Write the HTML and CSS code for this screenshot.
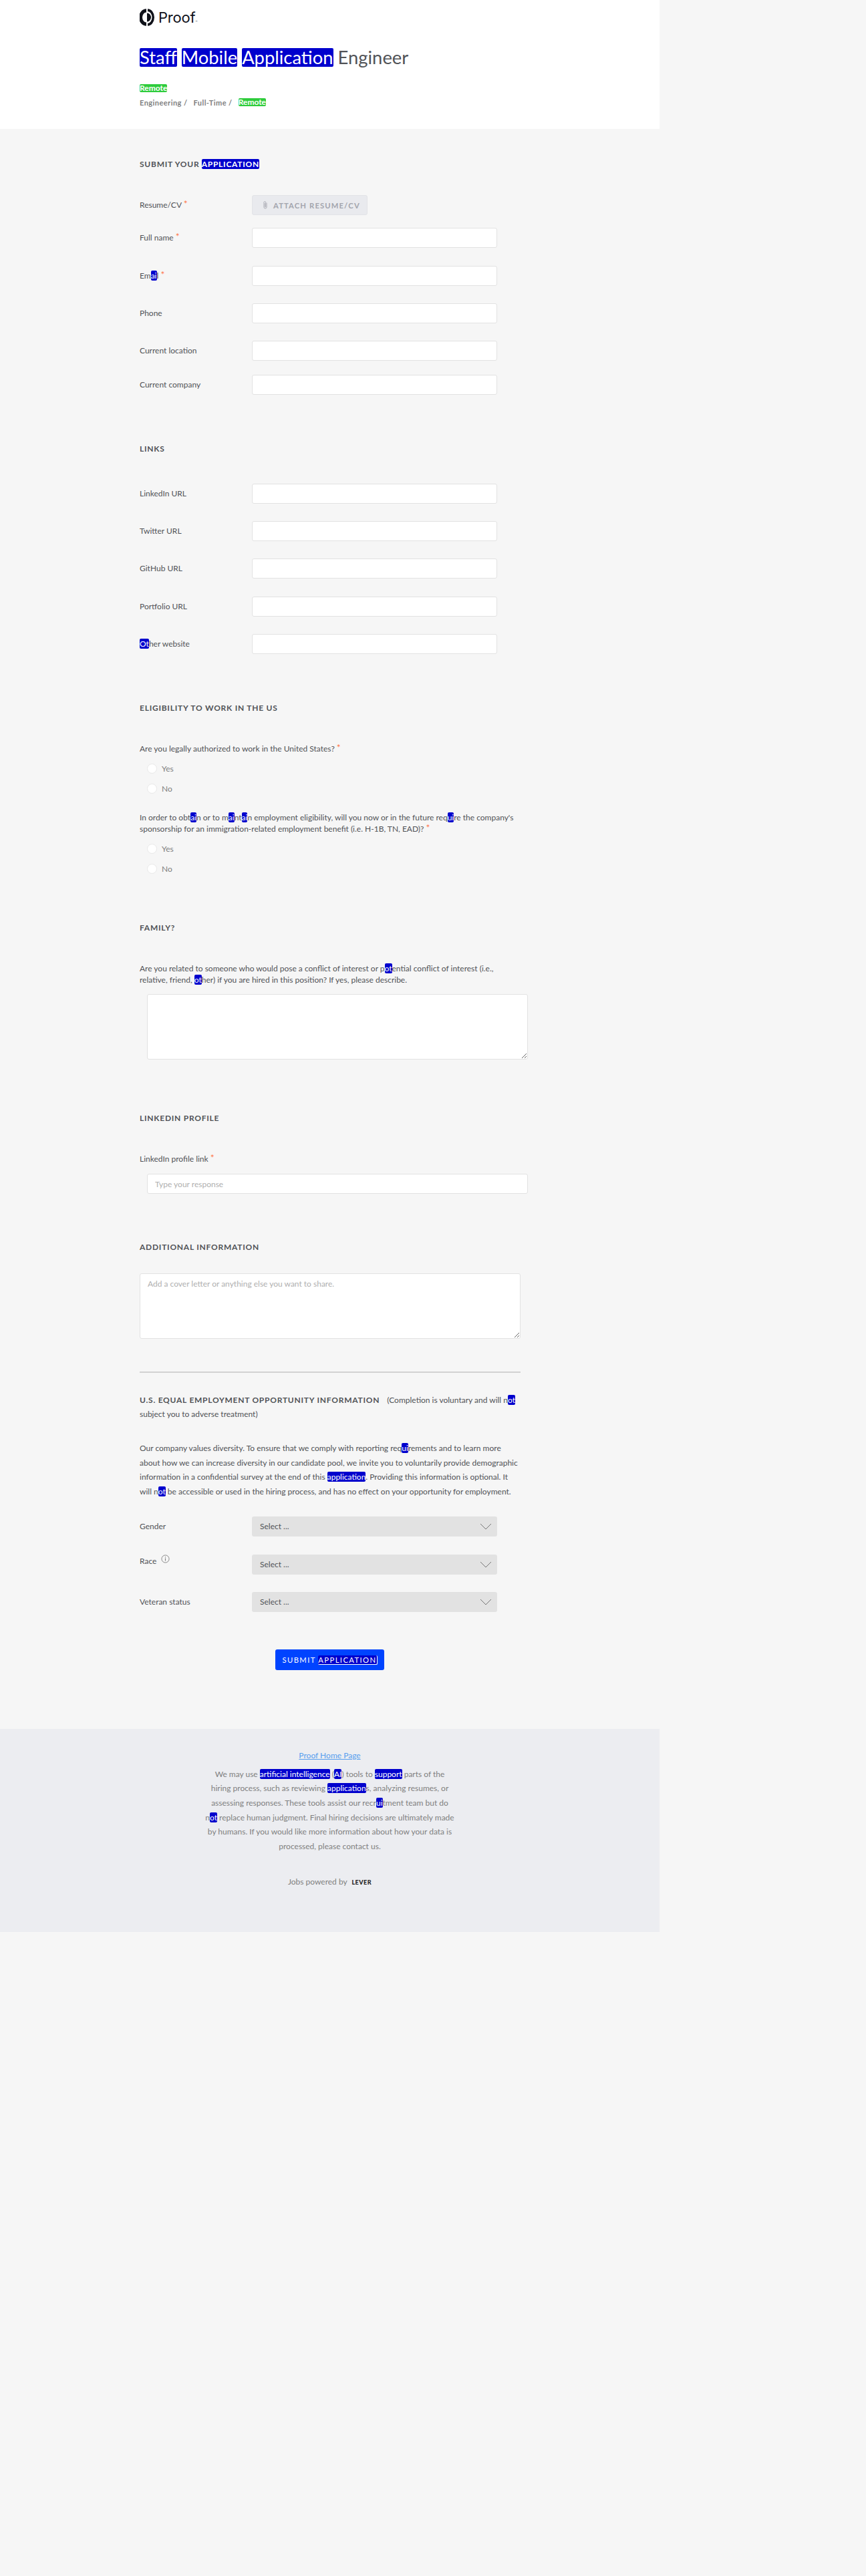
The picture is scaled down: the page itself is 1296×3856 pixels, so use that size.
FILE: index.html
```html
<!DOCTYPE html>
<html lang="en">
  <head>
    <meta charset="UTF-8" />
    <meta name="viewport" content="width=device-width, initial-scale=1.0" />
    <title>Proof - Staff Mobile Application Engineer</title>
    <link rel="stylesheet" href="styles.css">
  </head>
  <body>
    <div class="page">
      <header class="job-header">
        <a class="logo" href="#">
          <svg class="logo-mark" viewBox="0 0 22 26" width="22" height="26">
            <path d="M10 .2A11 12.8 0 0 0 10 25.8V20.5A6 7.5 0 0 1 10 5.5z" fill="#10121a"/>
            <path d="M12 .3A10 12.7 0 0 1 12 25.7V22A6.5 9 0 0 0 12 4z" fill="#10121a"/>
            <path d="M11 6.5A6 6.5 0 0 1 11 19.5z" fill="#10121a"/>
          </svg>
          <span class="logo-text">Proof</span><span class="logo-tm">™</span>
        </a>
        <h1><mark>Staff</mark> <mark>Mobile</mark> <mark>Application</mark> Engineer</h1>
        <div class="tag-row"><mark class="tag">Remote</mark></div>
        <div class="job-meta">
          <span>Engineering /</span>
          <span>Full-Time /</span>
          <mark class="tag">Remote</mark>
        </div>
      </header>

      <form class="apply-form" onsubmit="event.preventDefault()">
        <h4 class="first-heading">SUBMIT YOUR <mark>APPLICATION</mark></h4>

        <div class="row row-attach">
          <label>Resume/CV <span class="req">*</span></label>
          <button type="button" class="attach">
            <svg viewBox="0 0 12 16" width="10" height="14"><path d="M8.5 4v7.6a2.5 2.5 0 0 1-5 0V3.2a1.7 1.7 0 0 1 3.4 0v7.6a.8.8 0 0 1-1.6 0V4.5" fill="none" stroke="#a3a5ad" stroke-width="1"/></svg>
            ATTACH RESUME/CV
          </button>
        </div>
        <div class="row row-wide">
          <label>Full name <span class="req">*</span></label>
          <input type="text" />
        </div>
        <div class="row">
          <label>Em<mark>ai</mark>l <span class="req">*</span></label>
          <input type="email" />
        </div>
        <div class="row">
          <label>Phone</label>
          <input type="text" />
        </div>
        <div class="row row-location">
          <label>Current location</label>
          <input type="text" />
        </div>
        <div class="row">
          <label>Current company</label>
          <input type="text" />
        </div>

        <h4>LINKS</h4>
        <div class="row">
          <label>LinkedIn URL</label>
          <input type="text" />
        </div>
        <div class="row">
          <label>Twitter URL</label>
          <input type="text" />
        </div>
        <div class="row row-wide">
          <label>GitHub URL</label>
          <input type="text" />
        </div>
        <div class="row">
          <label>Portfolio URL</label>
          <input type="text" />
        </div>
        <div class="row">
          <label><mark>Ot</mark>her website</label>
          <input type="text" />
        </div>

        <h4>ELIGIBILITY TO WORK IN THE US</h4>
        <p class="question">Are you legally authorized to work in the United States? <span class="req">*</span></p>
        <div class="radio-list">
          <label class="radio"><span class="radio-dot"></span>Yes</label>
          <label class="radio"><span class="radio-dot"></span>No</label>
        </div>
        <p class="question">In order to obt<mark>ai</mark>n or to m<mark>ai</mark>nt<mark>ai</mark>n employment eligibility, will you now or in the future req<mark>ui</mark>re the company's sponsorship for an immigration-related employment benefit (i.e. H-1B, TN, EAD)? <span class="req">*</span></p>
        <div class="radio-list">
          <label class="radio"><span class="radio-dot"></span>Yes</label>
          <label class="radio"><span class="radio-dot"></span>No</label>
        </div>

        <h4 class="family-heading">FAMILY?</h4>
        <p class="question">Are you related to someone who would pose a conflict of interest or p<mark>ot</mark>ential conflict of interest (i.e., relative, friend, <mark>ot</mark>her) if you are hired in this position? If yes, please describe.</p>
        <textarea class="family-input"></textarea>

        <h4 class="linkedin-heading">LINKEDIN PROFILE</h4>
        <p class="question">LinkedIn profile link <span class="req">*</span></p>
        <input class="wide-input" type="text" placeholder="Type your response" />

        <h4 class="additional-heading">ADDITIONAL INFORMATION</h4>
        <textarea placeholder="Add a cover letter or anything else you want to share."></textarea>

        <hr />

        <div class="eeo-title"><h4>U.S. EQUAL EMPLOYMENT OPPORTUNITY INFORMATION</h4> (Completion is voluntary and will n<mark>ot</mark> subject you to adverse treatment)</div>
        <p class="eeo-text">Our company values diversity. To ensure that we comply with reporting req<mark>ui</mark>rements and to learn more about how we can increase diversity in our candidate pool, we invite you to voluntarily provide demographic information in a confidential survey at the end of this <mark>application</mark>. Providing this information is optional. It will n<mark>ot</mark> be accessible or used in the hiring process, and has no effect on your opportunity for employment.</p>

        <div class="row row-wide">
          <label>Gender</label>
          <div class="select">Select ...
            <svg viewBox="0 0 18 10" width="18" height="10"><path d="M1 1l8 8 8-8" fill="none" stroke="#777" stroke-width="1"/></svg>
          </div>
        </div>
        <div class="row race-row">
          <label>Race
            <svg class="info" viewBox="0 0 14 14" width="13" height="13"><circle cx="7" cy="7" r="6" fill="none" stroke="#808080"/><path d="M7 6v4.2M7 3.4v1.4" stroke="#808080" stroke-width="1.2"/></svg>
          </label>
          <div class="select">Select ...
            <svg viewBox="0 0 18 10" width="18" height="10"><path d="M1 1l8 8 8-8" fill="none" stroke="#777" stroke-width="1"/></svg>
          </div>
        </div>
        <div class="row">
          <label>Veteran status</label>
          <div class="select">Select ...
            <svg viewBox="0 0 18 10" width="18" height="10"><path d="M1 1l8 8 8-8" fill="none" stroke="#777" stroke-width="1"/></svg>
          </div>
        </div>

        <div class="submit-wrap">
          <button type="submit" class="submit">SUBMIT <mark>APPLICATION</mark></button>
        </div>
      </form>

      <footer class="job-footer">
        <a class="home-link" href="#">Proof Home Page</a>
        <p>We may use <mark>artificial intelligence</mark> (<mark>AI</mark>) tools to <mark>support</mark> parts of the hiring process, such as reviewing <mark>application</mark>s, analyzing resumes, or assessing responses. These tools assist our recr<mark>ui</mark>tment team but do n<mark>ot</mark> replace human judgment. Final hiring decisions are ultimately made by humans. If you would like more information about how your data is processed, please contact us.</p>
        <div class="powered">Jobs powered by <span class="lever">LEVER</span></div>
      </footer>
    </div>
  </body>
</html>
```

FILE: styles.css
```css
* {
  box-sizing: border-box;
}

body {
  margin: 0;
  padding: 0;
  min-height: 3856px;
  background: #f6f6f6;
  color: #515357;
  font-family: Lato, "Open Sans", sans-serif;
  font-size: 12px;
}

.page {
  width: 987px;
}

mark {
  background: #0000cd;
  color: #fff;
  border-radius: 2px;
}

.job-header {
  background: #fff;
  height: 193px;
  padding: 13px 0 0 209px;
}

.logo {
  display: flex;
  align-items: center;
  height: 26px;
  color: #10121a;
  text-decoration: none;
}

.logo-mark {
  margin-right: 6px;
}

.logo-text {
  font-family: Inter, sans-serif;
  font-size: 22px;
  letter-spacing: -0.2px;
}

.logo-tm {
  font-size: 4px;
  align-self: flex-end;
  margin-bottom: 4px;
}

h1 {
  margin: 33px 0 0;
  font-size: 27.4px;
  font-weight: 400;
  line-height: 28px;
  white-space: nowrap;
}

h1 mark {
  display: inline-block;
  line-height: 28px;
}

.tag-row {
  margin-top: 26px;
  height: 12px;
  line-height: 12px;
}

.tag {
  display: inline-block;
  background: #2ecc3c;
  font-size: 12px;
  font-weight: 700;
  line-height: 12px;
}

.job-meta {
  margin-top: 9px;
  display: flex;
  align-items: center;
  gap: 9px;
  height: 12px;
  color: #808080;
  font-size: 11px;
  font-weight: 700;
  letter-spacing: 0.45px;
}

.job-meta .tag {
  letter-spacing: 0;
}

.apply-form {
  padding: 0 0 0 209px;
}

/* row margins collapse into the heading margin, so the top value is the whole gap */
h4 {
  margin: 72px 0 43px;
  font-size: 12px;
  font-weight: 700;
  letter-spacing: 0.75px;
  line-height: 18px;
  color: #515357;
}

.first-heading {
  margin: 44px 0 37px;
}

.family-heading {
  margin-top: 65px;
}

.linkedin-heading {
  margin-top: 79px;
}

.additional-heading {
  margin: 71px 0 30px;
}

.row {
  display: flex;
  width: 535px;
  margin-bottom: 26px;
}

.row-attach {
  margin-bottom: 19px;
}

.row-wide {
  margin-bottom: 27px;
}

.row-location {
  margin-bottom: 21px;
}

.row label {
  width: 168px;
  flex-shrink: 0;
  line-height: 30px;
}

.race-row label {
  line-height: 16px;
}

.info {
  margin-left: 4px;
  vertical-align: 1px;
}

.req {
  color: #ff794f;
  font-size: 14px;
  line-height: 0;
  vertical-align: 1px;
}

input,
textarea {
  display: block;
  background: #fff;
  border: 1px solid #e2e2e2;
  border-radius: 3px;
  font-family: inherit;
  font-size: 12px;
  padding: 4px 11px;
}

input {
  width: 367px;
  height: 30px;
}

::placeholder {
  color: #b0b0b0;
}

.attach {
  display: flex;
  align-items: center;
  gap: 7px;
  width: 173px;
  height: 30px;
  padding: 0 0 0 14px;
  background: #e9eaee;
  border: 1px solid #e2e3e7;
  border-radius: 3px;
  color: #a3a5ad;
  font-family: inherit;
  font-size: 11.25px;
  font-weight: 700;
  letter-spacing: 1.125px;
  white-space: nowrap;
}

.question {
  width: 570px;
  margin: 0;
  line-height: 17px;
}

.radio-list {
  margin: 6px 0 20px;
  padding-left: 11px;
}

.radio {
  display: flex;
  align-items: center;
  height: 30px;
  color: #808080;
}

.radio-dot {
  width: 15px;
  height: 15px;
  margin-right: 7px;
  background: #fff;
  border: 1px solid #e8e8e8;
  border-radius: 50%;
}

textarea {
  width: 570px;
  height: 98px;
  padding: 7px 11px;
}

.family-input {
  margin: 13px 0 0 11px;
}

.wide-input {
  width: 570px;
  margin: 14px 0 0 11px;
}

hr {
  border: 0;
  border-top: 2px solid #d2d2d2;
  width: 570px;
  margin: 49px 0 30px;
}

.eeo-title {
  width: 570px;
  line-height: 21px;
}

.eeo-title h4 {
  display: inline;
  margin: 0 8px 0 0;
}

.eeo-text {
  width: 570px;
  margin: 30px 0 26px;
  line-height: 21.7px;
}

.select {
  display: flex;
  align-items: center;
  justify-content: space-between;
  width: 367px;
  height: 30px;
  padding: 0 8px 0 12px;
  background: #e2e2e2;
  border-radius: 3px;
}

.submit-wrap {
  display: flex;
  justify-content: center;
  margin: 56px 0 0 -209px;
  width: 987px;
}

.submit {
  width: 163px;
  height: 31px;
  padding: 0;
  background: #0044ff;
  border: 0;
  border-radius: 3px;
  color: #fff;
  font-family: inherit;
  font-size: 11.25px;
  font-weight: 400;
  letter-spacing: 1.4px;
  white-space: nowrap;
}

.submit mark {
  border-bottom: 1px solid #fff;
  border-right: 1px solid #fff;
}

.job-footer {
  margin-top: 88px;
  height: 304px;
  padding-top: 31px;
  background: #ecedf1;
  text-align: center;
  color: #808080;
}

.home-link {
  display: block;
  color: #579eee;
  line-height: 18px;
}

.job-footer p {
  width: 375px;
  margin: 8px auto 0;
  line-height: 21.6px;
}

.powered {
  margin-top: 34px;
  line-height: 18px;
}

.lever {
  margin-left: 4px;
  color: #222;
  font-size: 9px;
  font-weight: 900;
  letter-spacing: 0.5px;
}
```
